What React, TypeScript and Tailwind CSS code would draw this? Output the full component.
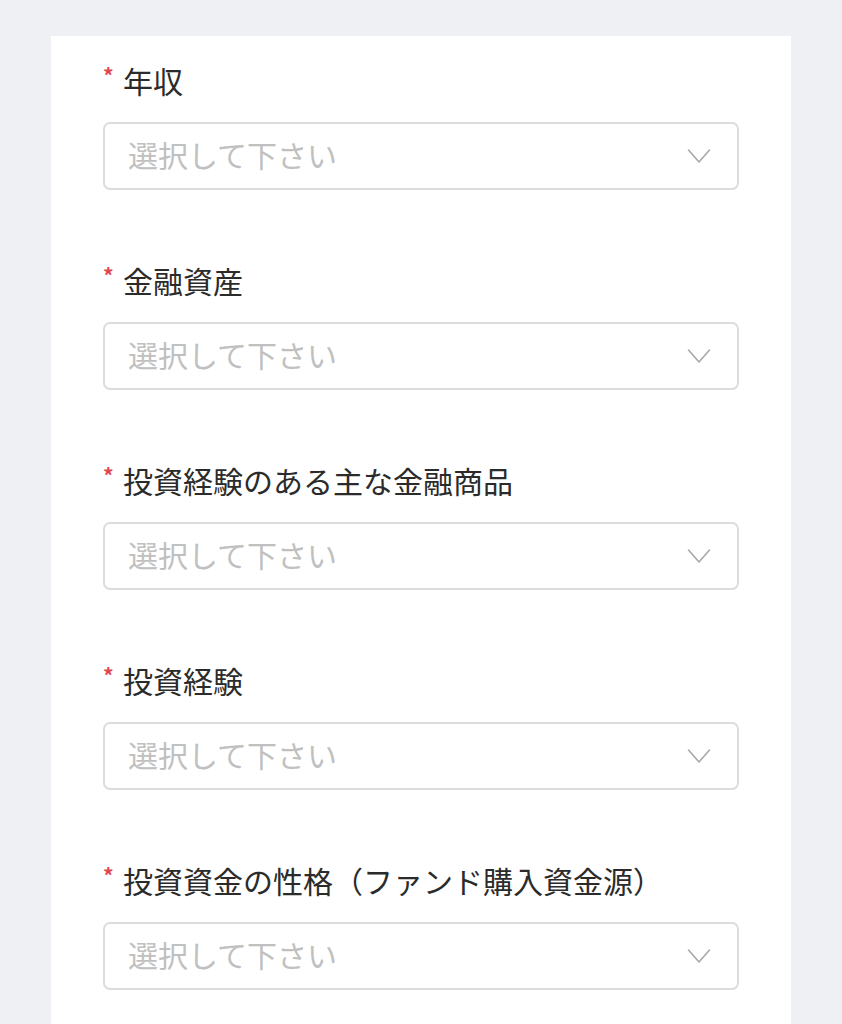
import React from 'react';

const FIELDS = [
  '年収',
  '金融資産',
  '投資経験のある主な金融商品',
  '投資経験',
  '投資資金の性格（ファンド購入資金源）',
];

function Chevron() {
  return (
    <svg
      width="24"
      height="16"
      viewBox="0 0 24 16"
      fill="none"
      stroke="#a8a8a8"
      strokeWidth="1.6"
      strokeLinecap="round"
      strokeLinejoin="round">
      <path d="M1.5 2 L12 14 L22.5 2" />
    </svg>
  );
}

function SelectField({ label }: { label: string }) {
  return (
    <div className="h-[200px]">
      <div className="flex h-[40px] items-center">
        <span className="mt-[-10px] w-[20px] text-[21px] font-bold leading-none text-[#e0464e]">
          *
        </span>
        <span className="text-[30px] leading-[40px] text-[#2b2b2b]">
          {label}
        </span>
      </div>
      <button
        type="button"
        className="mt-[22px] flex h-[68px] w-[636px] items-center justify-between rounded-[7px] border-2 border-[#dcdcdc] bg-white pl-[23px] pr-[26px] text-left">
        <span className="mb-[5px] text-[30px] leading-none text-[#c0c0c0]">
          選択して下さい
        </span>
        <Chevron />
      </button>
    </div>
  );
}

export default function App() {
  return (
    <div
      className="h-[1024px] overflow-hidden bg-[#eff0f4] pt-[36px]"
      style={{
        fontFamily:
          '"Noto Sans CJK JP", "Noto Sans", "Liberation Sans", sans-serif',
      }}>
      <div className="ml-[51px] h-[988px] w-[740px] bg-white pl-[52px] pt-[24px]">
        {FIELDS.map((f) =>
        <SelectField key={f} label={f} />
        )}
      </div>
    </div>
  );
}
